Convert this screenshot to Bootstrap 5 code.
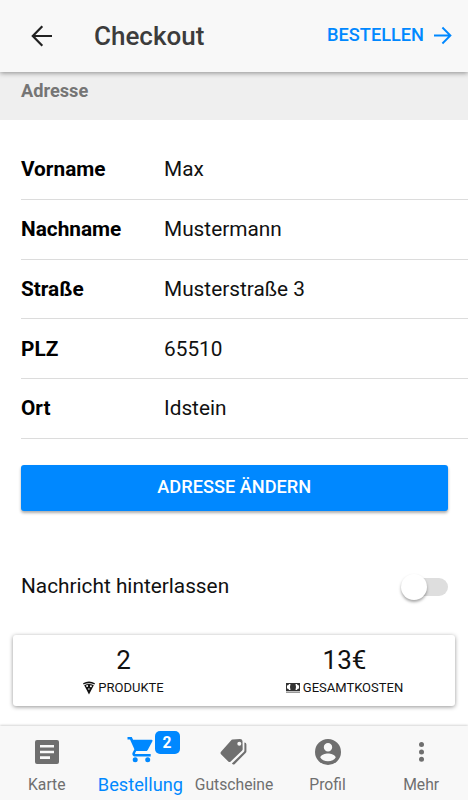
<!DOCTYPE html>
<html lang="de">
<head>
<meta charset="utf-8">
<meta name="viewport" content="width=device-width, initial-scale=1">
<title>Checkout</title>
<link href="https://cdn.jsdelivr.net/npm/bootstrap@5.3.0/dist/css/bootstrap.min.css" rel="stylesheet">
<style>
:root { --accent: #0088ff; }
body { font-family: Roboto, "Noto Sans", sans-serif; font-size: 20.8px; line-height: 24px; color: #111; background: #fff; }
svg { display: block; flex: none; }
.screen { height: 800px; }
.topbar { height: 72px; background: #f8f8f8; padding: 0 15px 0 29px; box-shadow: 0 1px 5px rgba(0,0,0,.42); z-index: 2; }
.topbar h1 { font-size: 26px; font-weight: 500; color: #3c3c3c; margin-left: 40px; line-height: 30px; }
.order-link { font-size: 18.2px; line-height: 22px; font-weight: 500; color: var(--accent); }
.order-link span { margin-top: -2px; }
.section-head { height: 48px; background: #efefef; color: #757575; font-size: 18.2px; font-weight: 700; padding: 7px 21px 0; }
.fields { padding: 20px 0 0 21px; }
.field-row { height: 59.75px; border-bottom: 1px solid #dcdcdc; }
.field-row dt { width: 143px; font-weight: 700; color: #000; }
.field-row dd { font-weight: 400; }
.btn-address { height: 46px; margin: 26.5px 20.5px 0 21px; border-radius: 3px; background: var(--accent); border: 0; color: #fff; font-size: 18.2px; line-height: 22px; font-weight: 500; padding: 0 0 2px; box-shadow: 0 2px 3px rgba(0,0,0,.33); }
.btn-address:hover { background: #007bea; color: #fff; }
.message-row { margin: 55.5px 20px 0 21px; height: 40px; }
.message-row .label-text { margin-top: -1px; }
.toggle { width: 47px; height: 26px; }
.toggle-track { width: 38px; height: 18px; border-radius: 9px; background: #dedede; }
.toggle-knob { width: 26px; height: 26px; left: 0; top: 0; background: #fff; box-shadow: 0 2px 3px rgba(0,0,0,.35); }
.totals { height: 71px; margin: 28.25px 13px 0; border-radius: 3px; box-shadow: 0 1px 4px rgba(0,0,0,.42); background: #fff; }
.totals .amount { font-size: 26px; line-height: 30px; padding-top: 10px; }
.totals .caption { font-size: 13px; line-height: 16px; margin-top: 5px; gap: 3px; }
.tabs { height: 74px; background: #f8f8f8; box-shadow: 0 -1px 2px rgba(0,0,0,.16); color: #6f6f6f; font-size: 15.7px; }
.tab { width: 93.6px; padding-top: 10px; white-space: nowrap; color: inherit; text-decoration: none; }
.tab .caption { line-height: 22px; margin-top: 6px; }
.tab-on { color: var(--accent); }
.tab-on .caption { font-size: 18.2px; }
.count { left: 61px; top: 5px; width: 25px; height: 23px; border-radius: 5px; background: var(--accent); color: #fff; font-size: 15.6px; line-height: 24px; font-weight: 700; }
</style>
<script src="https://cdn.jsdelivr.net/npm/bootstrap@5.3.0/dist/js/bootstrap.bundle.min.js"></script>
</head>
<body>
<div class="screen d-flex flex-column overflow-hidden">
  <header class="topbar d-flex align-items-center position-relative flex-shrink-0">
    <svg width="25" height="26" viewBox="0 0 25 26" fill="none" stroke="#222" stroke-width="2.2"><path d="M23 13H4M13.3 3.3 3.8 13l9.500 9.700"/></svg>
    <h1 class="mb-0">Checkout</h1>
    <a href="#" class="order-link ms-auto d-flex align-items-center text-decoration-none"><span>BESTELLEN</span>
      <svg class="ms-2" width="21" height="20" viewBox="0 0 21 20" fill="none" stroke="currentColor" stroke-width="1.9"><path d="M2 9.500h16M10.400 1.500l8 8-8 8"/></svg>
    </a>
  </header>
  <main class="flex-grow-1 d-flex flex-column">
    <div class="section-head">Adresse</div>
    <dl class="fields mb-0">
      <div class="field-row d-flex align-items-center"><dt>Vorname</dt><dd class="mb-0">Max</dd></div>
      <div class="field-row d-flex align-items-center"><dt>Nachname</dt><dd class="mb-0">Mustermann</dd></div>
      <div class="field-row d-flex align-items-center"><dt>Straße</dt><dd class="mb-0">Musterstraße 3</dd></div>
      <div class="field-row d-flex align-items-center"><dt>PLZ</dt><dd class="mb-0">65510</dd></div>
      <div class="field-row d-flex align-items-center"><dt>Ort</dt><dd class="mb-0">Idstein</dd></div>
    </dl>
    <button class="btn btn-address">ADRESSE ÄNDERN</button>
    <div class="message-row d-flex align-items-center justify-content-between">
      <span class="label-text">Nachricht hinterlassen</span>
      <span class="toggle position-relative d-flex align-items-center justify-content-end" role="switch" aria-checked="false"><span class="toggle-track"></span><span class="toggle-knob rounded-circle position-absolute"></span></span>
    </div>
    <section class="totals d-flex text-center">
      <div class="w-50">
        <div class="amount">2</div>
        <div class="caption d-flex justify-content-center align-items-center">
          <svg width="12" height="14" viewBox="0 0 12 14"><path d="M0 2.200Q6-1 12 2.200L11.400 3.400Q6 .9.600 3.400z" fill="#111"/><path d="M1.200 4.200Q6 2 10.800 4.200L6 13.500z" fill="#111"/><circle cx="4.100" cy="5.100" r="1" fill="#fff"/><circle cx="7.900" cy="5.300" r="1" fill="#fff"/><circle cx="5.900" cy="8" r=".8" fill="#fff"/></svg>
          <span>PRODUKTE</span>
        </div>
      </div>
      <div class="w-50">
        <div class="amount">13€</div>
        <div class="caption d-flex justify-content-center align-items-center">
          <svg width="14" height="12" viewBox="0 0 14 12"><path d="M0 1h14v8H0z" fill="#333"/><path d="M3 2h1.500q-1 3 0 6H3Q3 6.600 1 6.400V3.600Q3 3.400 3 2zM11 2H9.500q1 3 0 6H11q0-1.400 2-1.600V3.600Q11 3.400 11 2z" fill="#fff"/><path d="M0 10.200h14" stroke="#999" stroke-width="1.600"/></svg>
          <span>GESAMTKOSTEN</span>
        </div>
      </div>
    </section>
  </main>
  <nav class="tabs d-flex flex-shrink-0 text-center">
    <a href="#" class="tab"><svg class="mx-auto" width="32" height="32" viewBox="0 0 32 32"><path fill="currentColor" fill-rule="evenodd" d="M6 4h20q2 0 2 2v20q0 2-2 2H6q-2 0-2-2V6q0-2 2-2zM9 9v2.500h14V9zM9 14.700v2.600h14v-2.600zM9 20.300v2.600h10v-2.600z"/></svg><div class="caption">Karte</div></a>
    <a href="#" class="tab tab-on position-relative"><svg class="mx-auto" width="32" height="32" viewBox="0 0 32 32"><path fill="currentColor" d="M3.500 1h4.300l1.300 2.700h18.500q1.500 0 .8 1.500l-4.700 8.700q-.7 1.200-2.200 1.200h-9.300l-1.200 2.100q-.2.700.5.700h15.200v2.500H11.200c-2.300 0-3.500-2.200-2.500-4l1.700-3.200L6 3.500H3.500z"/><circle cx="11.200" cy="23.700" r="2.500" fill="currentColor"/><circle cx="23.700" cy="23.700" r="2.500" fill="currentColor"/></svg><span class="count position-absolute">2</span><div class="caption">Bestellung</div></a>
    <a href="#" class="tab"><svg class="mx-auto" width="32" height="32" viewBox="0 0 32 32"><path fill="currentColor" fill-rule="evenodd" d="M14.500 3.500 22 3q2.300 0 2.500 2l.2 8q0 1-.8 1.800L12.700 25.500q-1.200 1.100-2.400 0L3 18.200q-1.200-1.200 0-2.400L13 4.400q.6-.7 1.500-.9zM21.300 5.800a2 2 0 1 0 0 4 2 2 0 1 0 0-4z"/><path d="M26.400 6.500q2 .2 2 2v7q0 .8-.8 1.600L16.800 28q-1.200 1.100-2.300 0l-.6-.6L25.700 16q.7-.7.700-1.500z" fill="currentColor"/></svg><div class="caption">Gutscheine</div></a>
    <a href="#" class="tab"><svg class="mx-auto" width="32" height="32" viewBox="0 0 32 32"><path fill="currentColor" fill-rule="evenodd" d="M16 3a13 13 0 1 0 0 26 13 13 0 1 0 0-26zM16 7a4.200 4.200 0 1 1 0 8.400A4.200 4.200 0 1 1 16 7zM8.300 21.500C8.600 18.800 13.500 17.500 16 17.500s7.400 1.300 7.700 4C22.500 23.600 19.500 25.200 16 25.200s-6.500-1.600-7.700-3.700z"/></svg><div class="caption">Profil</div></a>
    <a href="#" class="tab"><svg class="mx-auto" width="32" height="32" viewBox="0 0 32 32" fill="currentColor"><circle cx="16.500" cy="8.500" r="2.500"/><circle cx="16.500" cy="16" r="2.500"/><circle cx="16.500" cy="23.300" r="2.500"/></svg><div class="caption">Mehr</div></a>
  </nav>
</div>
</body>
</html>
